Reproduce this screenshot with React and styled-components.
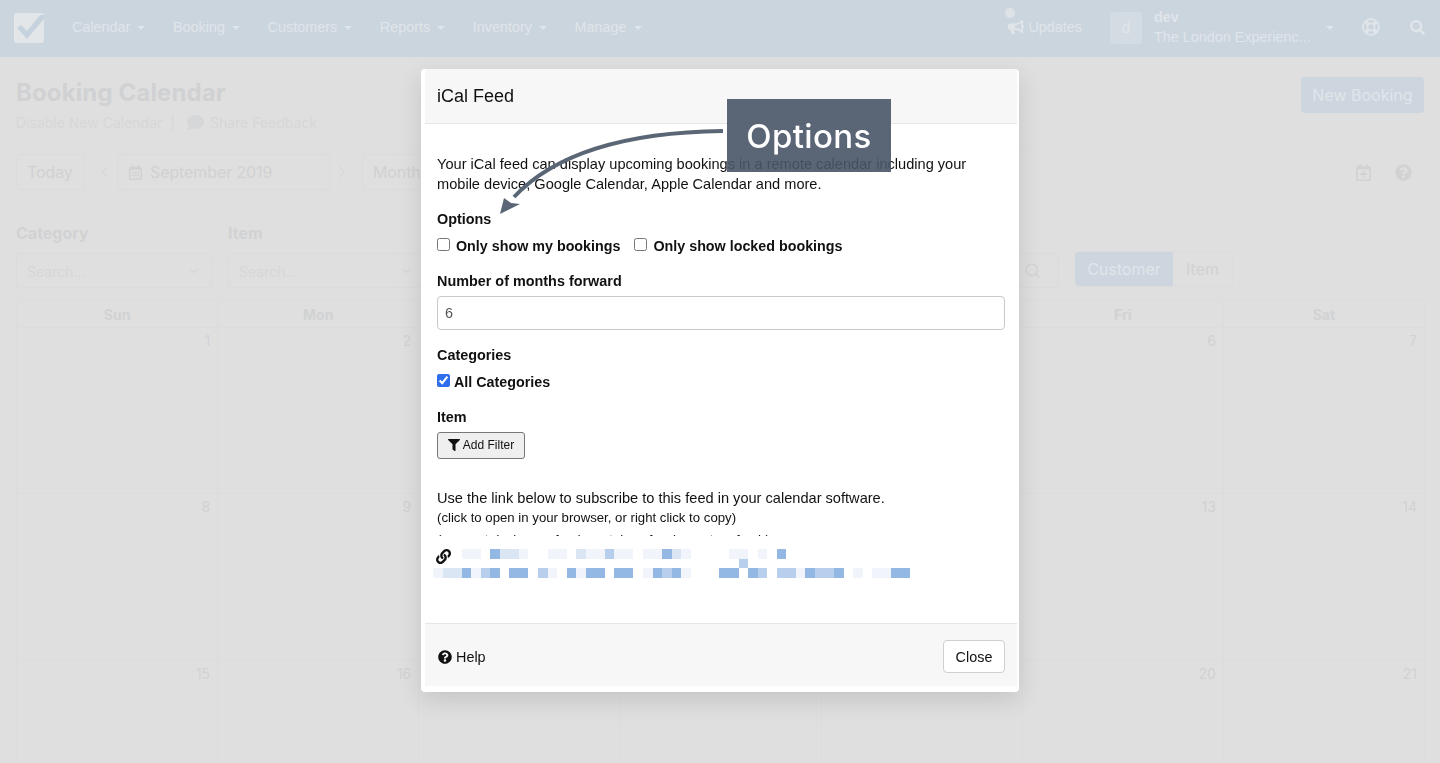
import styled, { createGlobalStyle } from "styled-components";
import {
  FaBullhorn,
  FaComment,
  FaFilter,
  FaLink,
  FaQuestionCircle,
  FaRegCalendarAlt,
  FaRegCalendarPlus,
  FaRegLifeRing,
  FaSearch,
} from "react-icons/fa";
import { ChevronDown, ChevronLeft, ChevronRight, Search } from "lucide-react";

const GlobalStyle = createGlobalStyle`
  html, body {
    margin: 0;
    height: 763px;
    overflow: hidden;
    background: #dfdfdf;
    font-family: "Liberation Sans", Arial, sans-serif;
  }
  * { box-sizing: border-box; }
`;

const Page = styled.div`
  width: 1440px;
  height: 763px;
  overflow: hidden;
  background: #dfdfdf;
`;

const Nav = styled.nav`
  height: 57px;
  background: #cbd5de;
  display: flex;
  align-items: center;
  padding: 0 15px 3px 14px;
  color: #e0e5ea;
  font-size: 14.4px;
`;
const Logo = styled.svg`
  width: 30px;
  height: 30px;
  margin: 2px 28px 0 0;
`;
const NavItem = styled.div`
  display: flex;
  align-items: center;
  gap: 7px;
  margin-right: 27.6px;
`;
const Caret = styled.span`
  width: 0;
  height: 0;
  border-left: 4px solid transparent;
  border-right: 4px solid transparent;
  border-top: 4px solid #e0e5ea;
  margin-top: 2px;
`;
const NavRight = styled.div`
  margin-left: auto;
  display: flex;
  align-items: center;
`;
const Updates = styled.div`
  position: relative;
  display: flex;
  align-items: center;
  gap: 4px;
  margin-right: 28px;
`;
const UpdateDot = styled.span`
  position: absolute;
  left: -3px;
  top: -11px;
  width: 10px;
  height: 10px;
  border-radius: 50%;
  background: #dee2e6;
`;
const Avatar = styled.div`
  width: 32px;
  height: 32px;
  margin: 2px 12px 0 0;
  border-radius: 3px;
  background: #d3dbe3;
  display: flex;
  align-items: center;
  justify-content: center;
  font-size: 16px;
`;
const Account = styled.div`
  width: 172px;
  line-height: 20px;
`;
const AccountName = styled.div`
  font-weight: 700;
`;
const NavIcon = styled.span`
  display: flex;
  margin-left: ${({ $left }) => $left}px;
`;

const Main = styled.main`
  padding: 20px 16px 0;
  font-family: Inter, "Liberation Sans", sans-serif;
`;
const Heading = styled.div`
  display: flex;
  justify-content: space-between;
  height: 55px;
`;
const Title = styled.h1`
  margin: 0;
  font-size: 24px;
  line-height: 32px;
  font-weight: 700;
  letter-spacing: 0.12px;
  color: #d0d1d3;
`;
const SubLinks = styled.div`
  display: flex;
  align-items: center;
  height: 20px;
  margin-top: 3px;
  font-size: 14px;
  color: #d6d7d8;
`;
const Divider = styled.span`
  margin: 0 12px 0 8px;
`;
const FeedbackLink = styled.span`
  display: flex;
  align-items: center;
  gap: 6px;
`;
const PrimaryButton = styled.div`
  width: 123px;
  height: 36px;
  border-radius: 4px;
  background: #cdd6de;
  color: #e0e5ea;
  font-size: 16px;
  display: flex;
  align-items: center;
  justify-content: center;
`;
const Toolbar = styled.div`
  display: flex;
  align-items: center;
  height: 42px;
  margin-top: 16px;
  padding-top: 5px;
  border-top: 1px solid #dddddd;
  color: #d1d1d2;
  font-size: 16px;
`;
const Outlined = styled.div`
  height: 36px;
  width: ${({ $w }) => $w}px;
  border: 1px solid #dbdbdb;
  border-radius: 4px;
  display: flex;
  align-items: center;
  gap: 7px;
  padding: 0 10px;
  letter-spacing: -0.1px;
`;
const Arrow = styled.span`
  display: flex;
  width: 32px;
  justify-content: center;
  padding-left: ${({ $left }) => $left}px;
  padding-right: ${({ $right }) => $right}px;
  color: #d3d3d4;
`;
const ToolIcons = styled.div`
  margin-left: auto;
  display: flex;
  align-items: center;
  gap: 23px;
  padding-right: 12px;
  color: #d2d2d3;
`;
const Filters = styled.div`
  display: flex;
  align-items: flex-end;
  margin-top: 33px;
`;
const Field = styled.div`
  width: 196px;
  margin-right: 16px;
`;
const FieldLabel = styled.div`
  font-size: 16px;
  font-weight: 700;
  line-height: 20px;
  margin-bottom: 10px;
  color: #d1d2d3;
`;
const Select = styled.div`
  height: 35px;
  border: 1px solid #dbdbdb;
  border-radius: 4px;
  display: flex;
  align-items: center;
  justify-content: space-between;
  padding: 1px 10px 0;
  font-size: 14px;
  color: #d6d7d8;
`;
const SearchBox = styled.div`
  margin-left: auto;
  width: 60px;
  height: 35px;
  border: 1px solid #dbdbdb;
  border-radius: 4px;
  display: flex;
  align-items: center;
  justify-content: flex-end;
  padding-right: 17px;
  color: #d1d2d3;
`;
const Segments = styled.div`
  display: flex;
  margin: 0 191px 1px 16px;
  height: 36px;
  border: 1px solid #dcdcdc;
  border-left: 0;
  border-radius: 4px;
  font-size: 16px;
`;
const Segment = styled.div`
  width: ${({ $w }) => $w}px;
  display: flex;
  align-items: center;
  justify-content: center;
  border-radius: ${({ $active }) => ($active ? "4px 0 0 4px" : "0")};
  background: ${({ $active }) => ($active ? "#cdd6de" : "transparent")};
  color: ${({ $active }) => ($active ? "#e0e5ea" : "#d1d2d3")};
`;
const Calendar = styled.div`
  display: grid;
  grid-template-columns: repeat(7, 201.15px);
  grid-template-rows: 27px 166px 167px 166px;
  margin-top: 12px;
  border-left: 1px solid #dcdcdc;
  border-top: 1px solid #dcdcdc;
`;
const DayName = styled.div`
  border-right: 1px solid #dcdcdc;
  border-bottom: 1px solid #dcdcdc;
  display: flex;
  align-items: center;
  justify-content: center;
  font-size: 14px;
  font-weight: 700;
  color: #d1d2d3;
`;
const DayCell = styled.div`
  border-right: 1px solid #dcdcdc;
  border-bottom: 1px solid #dcdcdc;
  padding: 5px 7px 0 0;
  text-align: right;
  font-size: 14px;
  line-height: 16px;
  color: #d1d2d3;
`;

const Overlay = styled.div`
  position: fixed;
  inset: 0;
  display: flex;
  justify-content: center;
  align-items: flex-start;
  padding-top: 69px;
`;
const Modal = styled.div`
  width: 598px;
  height: 623px;
  background: #fff;
  border-radius: 4px;
  padding: 0 2px 6px 4px;
  box-shadow: 0 8px 24px rgba(0, 0, 0, 0.12);
  display: flex;
  flex-direction: column;
  color: #111;
`;
const ModalHeader = styled.div`
  height: 55px;
  flex: none;
  background: #f7f7f7;
  border-bottom: 1px solid #e6e6e6;
  padding: 0 12px;
  display: flex;
  align-items: center;
  font-size: 18px;
`;
const ModalBody = styled.div`
  height: 499px;
  flex: none;
  padding: 30px 12px 0;
  font-size: 14.4px;
  line-height: 20px;
`;
const Para = styled.p`
  margin: ${({ $top }) => $top || 0}px 0 0;
  font-size: 14.6px;
`;
const Label = styled.div`
  font-weight: 700;
  margin-top: ${({ $top }) => $top}px;
`;
const CheckRow = styled.div`
  display: flex;
  align-items: center;
  height: 20px;
  margin-top: 7px;
`;
const CheckLabel = styled.label`
  display: flex;
  align-items: center;
  gap: ${({ $gap }) => $gap}px;
  margin-right: 14px;
  font-weight: 700;
  font-size: 14.3px;
`;
const Check = styled.input`
  margin: 0 0 3px;
  width: 13px;
  height: 13px;
  accent-color: #2f6fed;
`;
const NumberInput = styled.div`
  height: 34px;
  margin-top: 5px;
  border: 1px solid #c9c9c9;
  border-radius: 4px;
  padding: 0 7px;
  display: flex;
  align-items: center;
  color: #555;
`;
const FilterButton = styled.div`
  width: 88px;
  height: 27px;
  margin-top: 5px;
  padding-bottom: 1px;
  border: 1px solid #777;
  border-radius: 3px;
  background: #efefef;
  display: flex;
  align-items: center;
  justify-content: center;
  gap: 3px;
  font-size: 12px;
`;
const SmallNote = styled.div`
  font-size: 13.2px;
  line-height: 20px;
`;
const ClippedNote = styled.div`
  font-size: 13.2px;
  line-height: 20px;
  height: 6px;
  margin-top: 2px;
  overflow: hidden;
`;
const Mosaic = styled.div`
  position: relative;
  margin: 13px 0 0 -4px;
  display: grid;
  grid-template-columns: repeat(50, 9.56px);
  grid-auto-rows: 9.6px;
`;
const LEVELS = ["transparent", "#f1f5fb", "#dbe6f5", "#b7cfec", "#93b8e4"];
const Pixel = styled.span`
  background: ${({ $level }) => LEVELS[$level]};
`;
const LinkIcon = styled.span`
  position: absolute;
  left: 3px;
  top: 0;
  display: flex;
`;
const ModalFooter = styled.div`
  flex: 1;
  background: #f7f7f7;
  border-top: 1px solid #e6e6e6;
  padding: 16px 12px 0;
  display: flex;
  justify-content: space-between;
  align-items: flex-start;
  font-size: 14.4px;
`;
const HelpLink = styled.div`
  display: flex;
  align-items: center;
  gap: 4px;
  height: 33px;
  padding-left: 1px;
`;
const CloseButton = styled.div`
  width: 62px;
  height: 33px;
  border: 1px solid #cfcfcf;
  border-radius: 4px;
  background: #fff;
  display: flex;
  align-items: center;
  justify-content: center;
`;

const Callout = styled.div`
  position: absolute;
  left: 727px;
  top: 99px;
  width: 164px;
  height: 73px;
  background: rgba(72, 85, 103, 0.9);
  color: #fff;
  font-family: Inter, "Open Sans", sans-serif;
  font-size: 33px;
  font-weight: 500;
  letter-spacing: 0.4px;
  display: flex;
  align-items: center;
  justify-content: center;
`;
const CalloutArrow = styled.svg`
  position: absolute;
  left: 490px;
  top: 120px;
  width: 240px;
  height: 100px;
`;

const MENU = ["Calendar", "Booking", "Customers", "Reports", "Inventory", "Manage"];
const DAYS = ["Sun", "Mon", "Tue", "Wed", "Thu", "Fri", "Sat"];
const DATES = Array.from({ length: 21 }, (_, i) => i + 1);
// the blurred-out feed link, one digit per block: 0 is empty, 4 is the darkest
const PIXELS = [
  "0001104221001102113110114210000110104",
  "000000000000000000000000000000003",
  "12241340440310414404401434100044043033143340101144",
];
const pad = (row) => row.padEnd(50, "0").split("");

const App = () => {
  return (
    <Page>
      <GlobalStyle />
      <Nav>
        <Logo viewBox="0 0 30 30">
          <rect width="30" height="30" rx="3" fill="#e3e6e8" />
          <path d="M3 15l4-3 6 6L26 2h4v4L13 26z" fill="#c6d3de" />
        </Logo>
        {MENU.map((m) => (
          <NavItem key={m}>
            {m}
            <Caret />
          </NavItem>
        ))}
        <NavRight>
          <Updates>
            <UpdateDot />
            <FaBullhorn size={16} />
            Updates
          </Updates>
          <Avatar>d</Avatar>
          <Account>
            <AccountName>dev</AccountName>
            The London Experienc...
          </Account>
          <Caret />
          <NavIcon $left={28}>
            <FaRegLifeRing size={18} />
          </NavIcon>
          <NavIcon $left={30}>
            <FaSearch size={15} />
          </NavIcon>
        </NavRight>
      </Nav>

      <Main>
        <Heading>
          <div>
            <Title>Booking Calendar</Title>
            <SubLinks>
              Disable New Calendar
              <Divider>|</Divider>
              <FeedbackLink>
                <FaComment size={17} />
                Share Feedback
              </FeedbackLink>
            </SubLinks>
          </div>
          <PrimaryButton>New Booking</PrimaryButton>
        </Heading>
        <Toolbar>
          <Outlined $w={69}>Today</Outlined>
          <Arrow $left={8}>
            <ChevronLeft size={20} strokeWidth={1.2} />
          </Arrow>
          <Outlined $w={213}>
            <FaRegCalendarAlt size={15} />
            September 2019
          </Outlined>
          <Arrow $right={8}>
            <ChevronRight size={20} strokeWidth={1.2} />
          </Arrow>
          <Outlined $w={100}>Month</Outlined>
          <ToolIcons>
            <FaRegCalendarPlus size={17} />
            <FaQuestionCircle size={17} />
          </ToolIcons>
        </Toolbar>
        <Filters>
          <Field>
            <FieldLabel>Category</FieldLabel>
            <Select>
              Search...
              <ChevronDown size={14} />
            </Select>
          </Field>
          <Field>
            <FieldLabel>Item</FieldLabel>
            <Select>
              Search...
              <ChevronDown size={14} />
            </Select>
          </Field>
          <SearchBox>
            <Search size={17} />
          </SearchBox>
          <Segments>
            <Segment $w={98} $active>
              Customer
            </Segment>
            <Segment $w={59}>Item</Segment>
          </Segments>
        </Filters>
        <Calendar>
          {DAYS.map((d) => (
            <DayName key={d}>{d}</DayName>
          ))}
          {DATES.map((d) => (
            <DayCell key={d}>{d}</DayCell>
          ))}
        </Calendar>
      </Main>

      <Overlay>
        <Modal>
          <ModalHeader>iCal Feed</ModalHeader>
          <ModalBody>
            <Para>
              Your iCal feed can display upcoming bookings in a remote calendar including your
              <br />
              mobile device, Google Calendar, Apple Calendar and more.
            </Para>
            <Label $top={15}>Options</Label>
            <CheckRow>
              <CheckLabel $gap={6}>
                <Check type="checkbox" readOnly />
                Only show my bookings
              </CheckLabel>
              <CheckLabel $gap={6}>
                <Check type="checkbox" readOnly />
                Only show locked bookings
              </CheckLabel>
            </CheckRow>
            <Label $top={15}>Number of months forward</Label>
            <NumberInput>6</NumberInput>
            <Label $top={15}>Categories</Label>
            <CheckRow>
              <CheckLabel $gap={4}>
                <Check type="checkbox" checked readOnly />
                All Categories
              </CheckLabel>
            </CheckRow>
            <Label $top={15}>Item</Label>
            <FilterButton>
              <FaFilter size={12} />
              Add Filter
            </FilterButton>
            <Para $top={29}>
              Use the link below to subscribe to this feed in your calendar software.
            </Para>
            <SmallNote>(click to open in your browser, or right click to copy)</SmallNote>
            <ClippedNote>(on most devices, a feed can take a few hours to refresh)</ClippedNote>
            <Mosaic>
              {PIXELS.map((row, r) =>
                pad(row).map((v, i) => <Pixel key={`${r}-${i}`} $level={Number(v)} />)
              )}
              <LinkIcon>
                <FaLink size={15} />
              </LinkIcon>
            </Mosaic>
          </ModalBody>
          <ModalFooter>
            <HelpLink>
              <FaQuestionCircle size={14} />
              Help
            </HelpLink>
            <CloseButton>Close</CloseButton>
          </ModalFooter>
        </Modal>
      </Overlay>

      <Callout>Options</Callout>
      <CalloutArrow viewBox="490 120 240 100">
        <path d="M723 131C640 132 560 148 514 197" fill="none" stroke="#5a6675" strokeWidth="4" />
        <path d="M500 214L504 198L511 203L520 204Z" fill="#5a6675" />
      </CalloutArrow>
    </Page>
  );
};

export default App;
